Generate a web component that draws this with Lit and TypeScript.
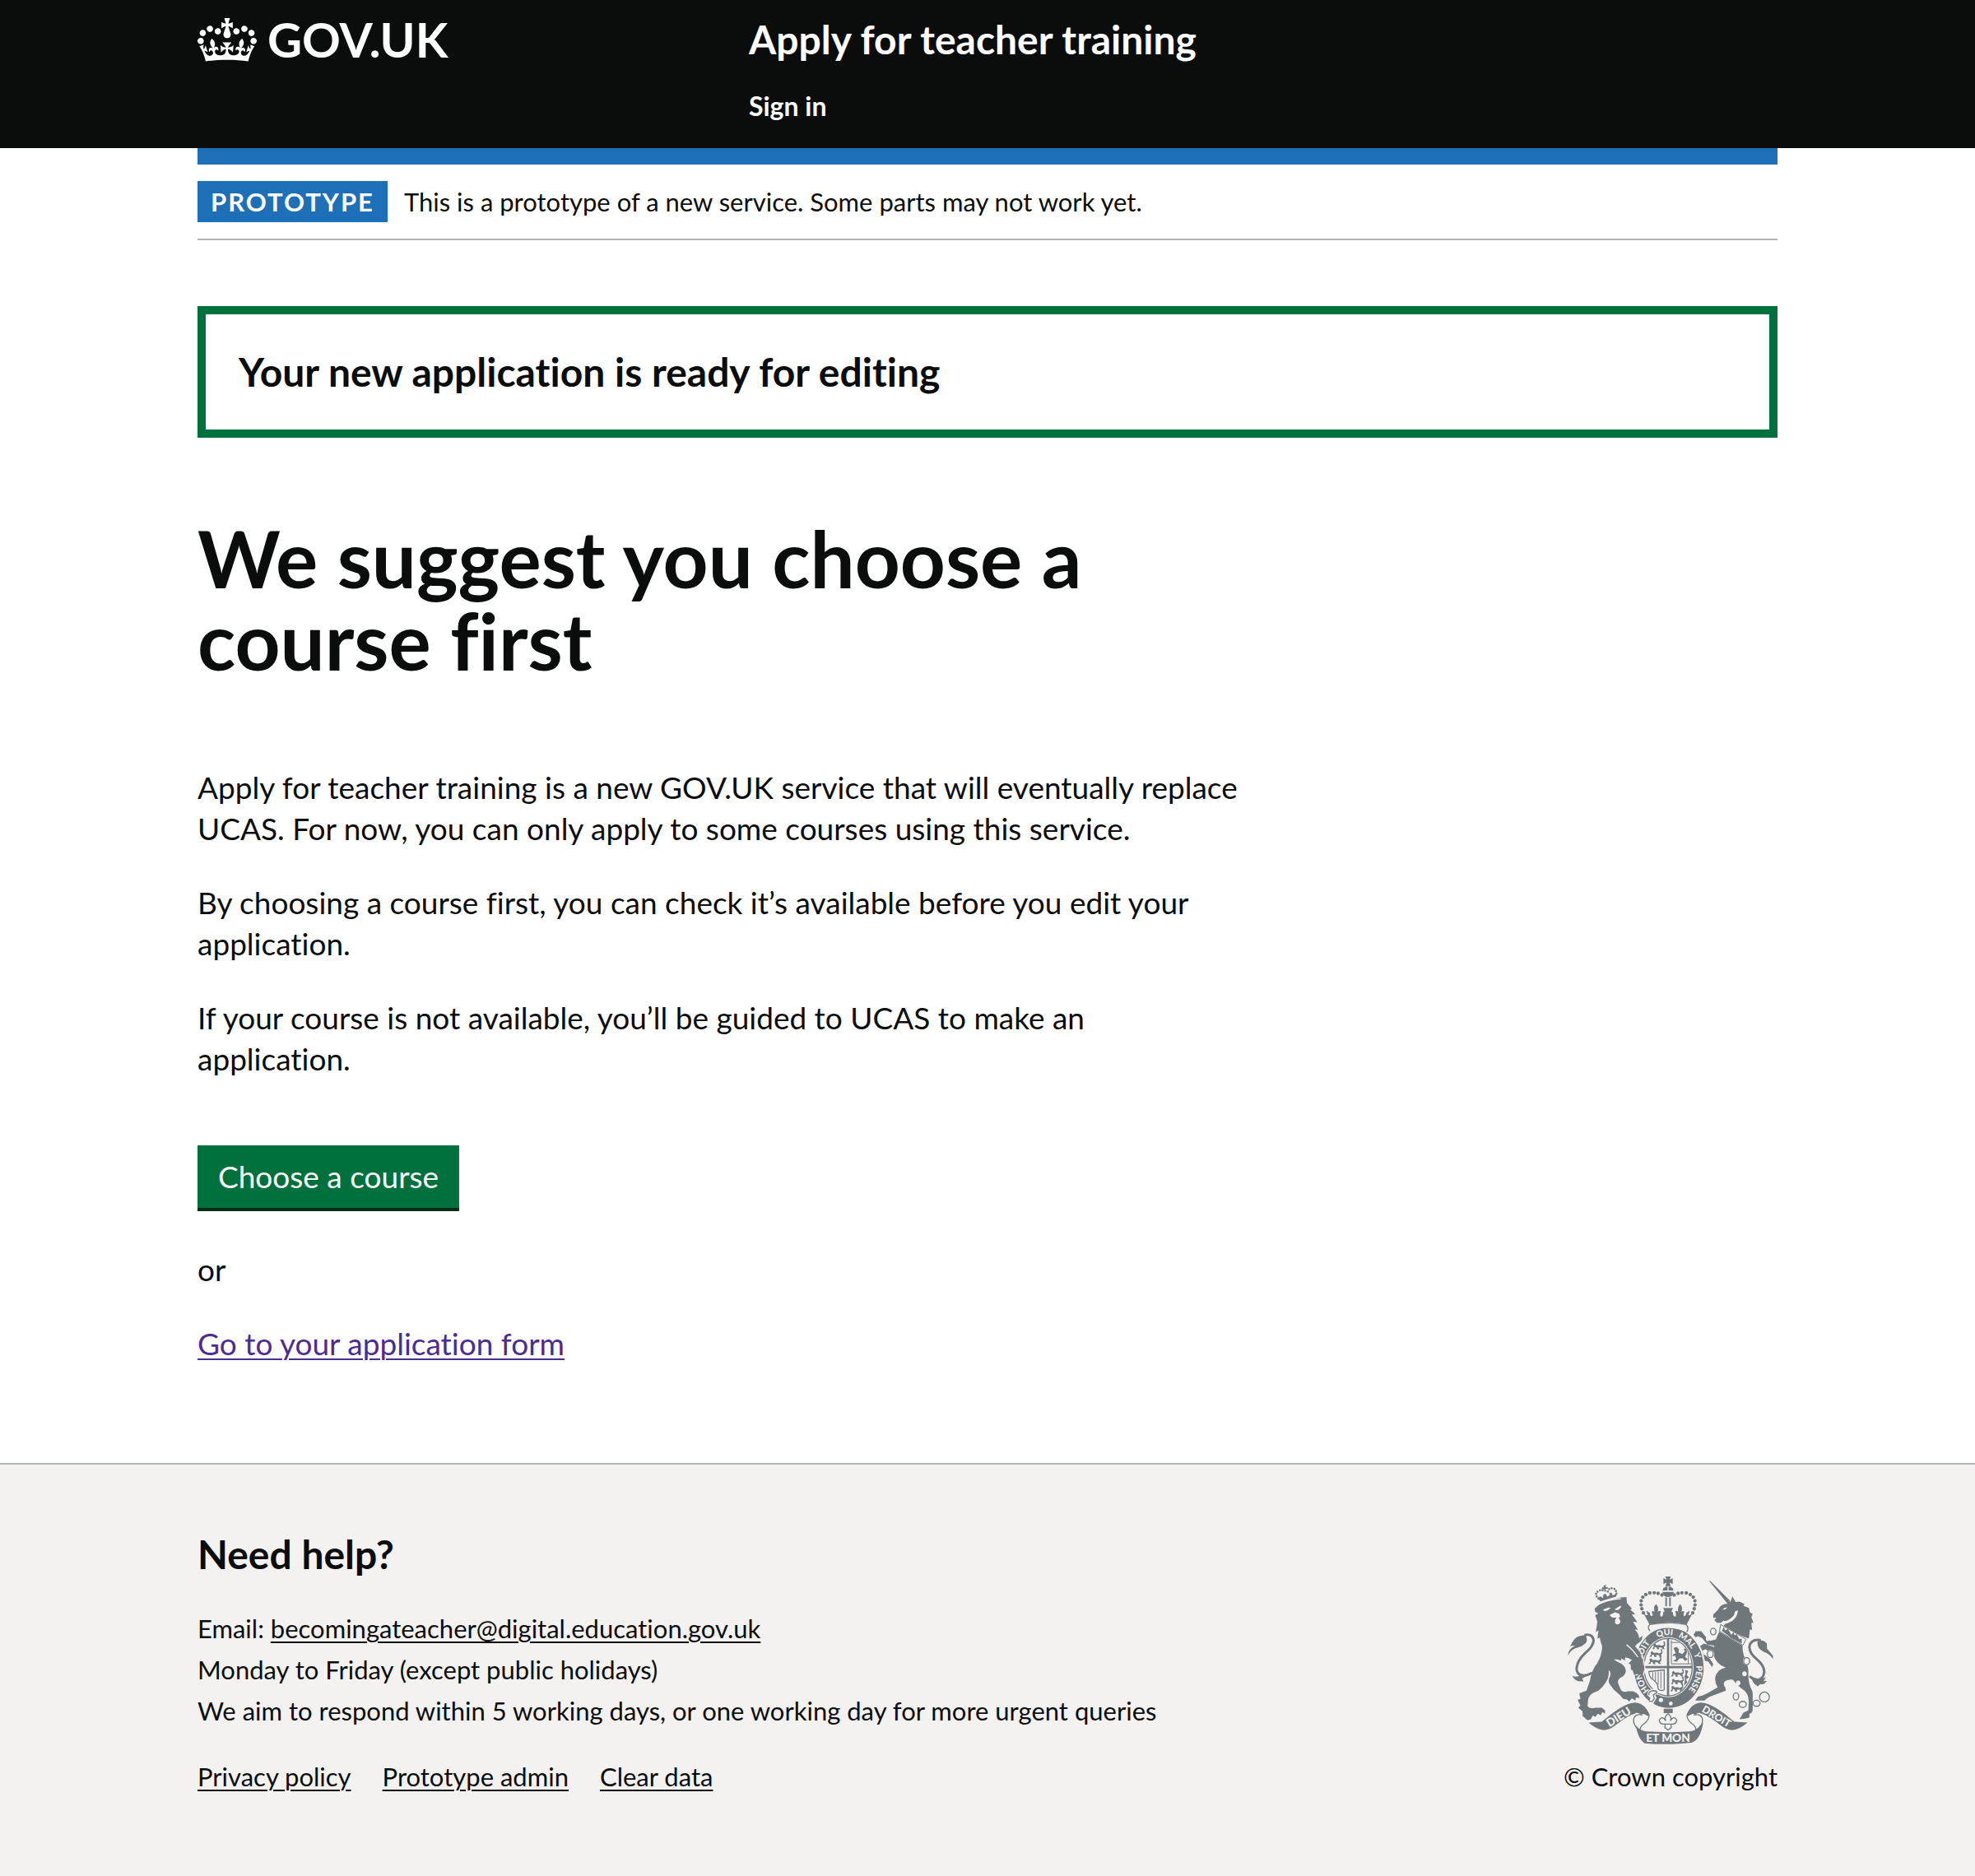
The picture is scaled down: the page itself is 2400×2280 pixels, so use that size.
import { LitElement, html, css, svg } from "lit";
import { customElement } from "lit/decorators.js";

const FONT = css`"Lato", "Noto Sans", sans-serif`;

@customElement("crown-mark")
class CrownMark extends LitElement {
  static styles = css`
    :host { display: block; }
    svg { display: block; width: 72px; height: 53px; }
  `;

  render() {
    return html`<svg viewBox="0 0 132 97" aria-hidden="true">
      <path fill="currentColor" fill-rule="evenodd" d="M25 30.2c3.5 1.5 7.7-.2 9.1-3.7 1.5-3.6-.2-7.8-3.9-9.2-3.6-1.4-7.6.3-9.1 3.9-1.4 3.5.3 7.5 3.9 9zM9 39.5c3.6 1.5 7.8-.2 9.2-3.7 1.5-3.6-.2-7.8-3.9-9.1-3.6-1.5-7.6.2-9.1 3.8-1.4 3.5.3 7.5 3.8 9zM4.4 57.2c3.5 1.5 7.7-.2 9.1-3.8 1.5-3.6-.2-7.7-3.9-9.1-3.5-1.5-7.6.3-9.1 3.8-1.4 3.5.3 7.6 3.9 9.1zm38.3-21.4c3.5 1.5 7.7-.2 9.1-3.8 1.5-3.6-.2-7.7-3.9-9.1-3.6-1.5-7.6.3-9.1 3.8-1.3 3.6.4 7.7 3.9 9.1zm64.4-5.6c-3.6 1.5-7.8-.2-9.1-3.7-1.5-3.6.2-7.8 3.8-9.2 3.6-1.4 7.7.3 9.2 3.9 1.3 3.5-.4 7.5-3.9 9zm15.9 9.3c-3.6 1.5-7.7-.2-9.1-3.7-1.5-3.6.2-7.8 3.7-9.1 3.6-1.5 7.7.2 9.2 3.8 1.5 3.5-.3 7.5-3.8 9zm4.7 17.7c-3.6 1.5-7.8-.2-9.2-3.8-1.5-3.6.2-7.7 3.9-9.1 3.6-1.5 7.7.3 9.2 3.8 1.3 3.5-.4 7.6-3.9 9.1zM89.3 35.8c-3.6 1.5-7.8-.2-9.2-3.8-1.4-3.6.2-7.7 3.9-9.1 3.6-1.5 7.7.3 9.2 3.8 1.4 3.6-.3 7.7-3.9 9.1zM69.7 17.7l8.9 4.7V9.3l-8.9 2.8c-.2-.3-.5-.6-.9-.9L72.4 0H59.6l3.5 11.2c-.3.3-.6.5-.9.9l-8.8-2.8v13.1l8.8-4.7c.3.3.6.7.9.9l-5 15.4v.1c-.2.8-.4 1.6-.4 2.4 0 4.1 3.1 7.5 7 8.1h.2c.3 0 .7.1 1 .1.4 0 .7 0 1-.1h.2c4-.6 7.1-4.1 7.1-8.1 0-.8-.1-1.7-.4-2.4V34l-5.1-15.4c.4-.2.7-.6 1-.9zM66 92.8c16.9 0 32.8 1.1 47.1 3.2 4-16.9 8.9-26.7 14-33.5l-9.6-3.4c1 4.9 1.1 7.2 0 10.2-1.5-1.4-3-4.3-4.2-8.7L108.6 76c2.8-2 5-3.2 7.5-3.3-4.4 9.4-10 11.9-13.6 11.2-4.3-.8-6.3-4.6-5.6-7.9 1-4.7 5.7-5.9 8-.5 4.3-8.7-3-11.4-7.6-8.8 7.1-7.2 7.9-13.5 2.1-21.1-8 6.1-8.1 12.3-4.5 20.8-4.7-5.4-12.1-2.5-9.5 6.2 3.4-5.2 7.9-2 7.2 3.1-.6 4.3-6.4 7.8-13.5 7.2-10.3-.9-10.9-8-11.2-13.8 2.5-.5 7.1 1.8 11 7.3L80.2 60c-4.1 4.4-8 5.3-12.3 5.4 1.4-4.4 8-11.6 8-11.6H55.5s6.4 7.2 7.9 11.6c-4.2-.1-8-1-12.3-5.4l1.4 16.4c3.9-5.5 8.5-7.7 10.9-7.3-.3 5.8-.9 12.8-11.1 13.8-7.2.6-12.9-2.9-13.5-7.2-.7-5 3.8-8.3 7.1-3.1 2.7-8.7-4.6-11.6-9.4-6.2 3.7-8.5 3.6-14.7-4.6-20.8-5.8 7.6-5 13.9 2.2 21.1-4.7-2.6-11.9.1-7.7 8.8 2.3-5.5 7.1-4.2 8.1.5.7 3.3-1.3 7.1-5.7 7.9-3.5.7-9-1.8-13.5-11.2 2.5.1 4.7 1.3 7.5 3.3l-4.7-15.4c-1.2 4.4-2.7 7.2-4.3 8.7-1.1-3-.9-5.3 0-10.2l-9.5 3.4c5 6.9 9.9 16.7 14 33.5 14.8-2.1 30.8-3.2 47.7-3.2z"></path>
    </svg>`;
  }
}

/** Royal coat of arms: lion, crowned garter and shield, unicorn, motto ribbon. */
@customElement("royal-arms")
class RoyalArms extends LitElement {
  static styles = css`
    :host { display: block; }
    svg { display: block; width: 250px; height: 204px; font-family: ${FONT}; font-weight: 900; }
    .ink { fill: #6f777b; }
    .paper { fill: #f3f2f1; }
    .line { fill: none; stroke: #6f777b; stroke-width: 4; }
    .thin { stroke-width: 3; }
    .tail { fill: none; stroke: #6f777b; stroke-width: 9; stroke-linecap: round; }
    .gap { fill: none; stroke: #f3f2f1; stroke-width: 4; }
    .beads { fill: none; stroke: #6f777b; stroke-width: 13; stroke-linecap: round; stroke-dasharray: 0 15; }
    .small-beads { fill: none; stroke: #6f777b; stroke-width: 8; stroke-linecap: round; stroke-dasharray: 0 10; }
    .garter { font-size: 31px; fill: #f3f2f1; text-anchor: middle; }
    .motto { font-size: 41px; fill: #f3f2f1; text-anchor: middle; }
    .motto-long { font-size: 37px; }
  `;

  private lion = svg`
    <g transform="translate(60 36)">
      <path class="tail" d="M76 224Q104 220 106 246 104 268 76 290 46 318 44 346 44 370 68 374 84 372 98 364"></path>
      <path class="ink" d="M12 300Q14 274 38 264 26 262 20 268 34 232 56 228L76 224Q86 240 78 254 60 270 44 272 24 278 12 300ZM28 374Q50 382 60 366L86 370 64 384 70 394 50 393Q36 390 28 374Z"></path>
      <path class="gap" d="M262 256Q292 300 294 350L288 372"></path>
      <path class="ink" d="M110 128L128 112 160 100 205 88 226 86 228 108 246 128 240 132 258 148 246 150 266 178 250 176 262 196 268 206 256 204Q272 220 272 236L284 228Q286 246 264 258L258 266 276 290 284 318 290 350 284 368 270 372 264 360 254 370 248 352 242 352 242 334 234 328 246 316 236 310 222 306 220 318 208 310 206 318 192 314 180 314 192 322Q224 334 224 356 222 372 206 380 192 388 196 402L206 426Q214 436 230 430L250 430Q264 434 272 446L272 456 262 452 258 464 246 456 236 468 228 460 214 458 202 444 180 424 166 406Q156 392 166 376 172 360 160 352 166 372 152 396 140 416 124 428L104 436Q88 446 86 462L84 484Q92 496 112 490L136 490 148 500 148 512 138 506 132 518 122 512 112 524 104 518 96 532 84 536 66 520 66 504 50 490 58 482 48 462 58 458 54 438 64 434 80 428 92 394Q100 350 118 330L130 306Q142 268 134 256L128 234 120 238 124 208 114 214 120 176 112 152 124 146 112 140Z"></path>
      <path class="paper" d="M140 132L162 124 168 127Q158 138 146 137ZM184 130L204 118 207 122Q198 135 188 134ZM164 152Q176 146 184 142L200 147 203 158 197 162Q208 174 201 183 190 190 184 180 184 166 190 161L174 161Z"></path>
      <path class="gap" d="M226 260Q252 280 268 306"></path>
      <path class="ink" d="M122 88L132 84 140 90 142 76 150 74 156 84 164 80 164 70 172 70 176 80 188 74 190 84 130 102Z M142 44L152 42 150 50 158 50 158 56 150 56 152 66 145 66 145 57 137 58 137 51 144 50Z"></path>
      <path class="small-beads" d="M124 92Q106 74 124 64T142 70"></path>
      <path class="small-beads" d="M158 66Q162 52 176 54T190 80"></path>
      <path class="gap" d="M122 114Q156 96 206 92"></path>
    </g>`;

  private unicorn = svg`
    <g transform="translate(435 36)">
      <path class="ink" d="M152 26L159 29 226 96 234 112 220 110Z"></path>
      <path class="ink" d="M230 106L238 84 250 104 264 103 282 112 278 118 298 126 302 142 312 148 307 160 315 180 307 180 310 206 302 204 298 238 278 230 240 214 206 192 216 176 206 172 196 180 182 180 172 170 180 161 168 162 168 150 184 134Q194 110 222 110Z"></path>
      <path class="paper" d="M258 134Q256 172 212 184 206 180 206 176 244 166 248 138ZM202 132Q208 123 219 124 214 133 202 132Z"></path>
      <path class="tail" d="M338 243Q304 240 300 268 300 292 328 314 356 338 354 362 350 388 328 388 312 386 304 378"></path>
      <path class="ink" d="M330 248Q350 238 364 256L364 274 386 300 386 312Q372 292 352 286 326 274 330 248ZM300 372Q330 394 360 378L352 394 364 392Q354 408 340 404L330 412Q312 400 310 388Z"></path>
      <path class="ink" d="M190 212L276 262Q272 278 282 306 298 340 296 364 296 400 306 420 314 432 312 452L312 500Q308 512 300 512L300 526 284 530 264 532 278 508 296 500 298 466Q296 440 282 428 256 410 240 388 222 386 210 394 202 404 212 416L214 428 160 448Q142 456 136 464L102 464 112 450 128 446 146 438 184 416Q172 396 176 376 184 350 214 344 180 332 170 300 166 260 190 212Z"></path>
      <path class="ink" d="M96 224L104 211 124 211 138 228 156 246 180 240 176 264 146 260 128 236 112 229 104 233ZM176 270L134 256 110 272 108 294 124 312 138 334 136 318 150 322 164 342 168 330 156 312 146 304 132 294 128 282 140 276 176 306Z"></path>
      <path class="paper" d="M194 184L290 240 276 264 190 212Z"></path>
      <path class="line thin" d="M195 186L288 240 276 262 191 211Z"></path>
      <path class="ink" d="M200 210L206 194 212 208 222 202 228 214 234 224 242 214 246 226 254 222 260 234 264 240 272 238 272 256 236 236Z"></path>
      <ellipse class="paper" cx="148" cy="238" rx="7" ry="9"></ellipse>
      <ellipse class="paper" cx="282" cy="366" rx="8" ry="9"></ellipse>
      <ellipse class="paper" cx="259" cy="400" rx="8" ry="9"></ellipse>
      <ellipse class="line" cx="168" cy="212" rx="10" ry="12"></ellipse>
      <ellipse class="paper" cx="157" cy="294" rx="15" ry="15"></ellipse>
      <ellipse class="line" cx="157" cy="294" rx="11" ry="13"></ellipse>
      <ellipse class="paper" cx="290" cy="320" rx="14" ry="15"></ellipse>
      <ellipse class="line" cx="290" cy="320" rx="11" ry="13"></ellipse>
      <ellipse class="line" cx="251" cy="449" rx="10" ry="13"></ellipse>
      <ellipse class="line" cx="276" cy="478" rx="13" ry="11"></ellipse>
      <ellipse class="line" cx="326" cy="474" rx="13" ry="11"></ellipse>
      <circle class="line" cx="355" cy="451" r="18"></circle>
    </g>`;

  private leopard = (x: number, y: number) => svg`
    <path class="ink" transform=${`translate(${x} ${y})`} d="M0 4L6 0 12 6 24 5 30 8 40 4 36 -6 42 -8 44 6 38 14 42 20 34 20 30 14 20 14 22 21 14 21 12 14 6 12 4 20 -4 20 2 12Z"></path>`;

  private shield = svg`
    <ellipse class="paper" cx="441" cy="380" rx="133" ry="153"></ellipse>
    <ellipse class="ink" cx="441" cy="380" rx="127" ry="147"></ellipse>
    <ellipse class="paper" cx="438" cy="378" rx="93" ry="110"></ellipse>
    <clipPath id="field"><ellipse cx="438" cy="378" rx="86" ry="103"></ellipse></clipPath>
    <g clip-path="url(#field)">
      ${this.leopard(384, 292)}${this.leopard(374, 320)}${this.leopard(370, 346)}
      ${this.leopard(452, 392)}${this.leopard(452, 420)}${this.leopard(450, 446)}
      <path class="ink" d="M500 388L512 392 506 406 514 416 504 422 508 434 496 446 500 424 498 412 502 402Z"></path>
      <path class="line thin" d="M450 280V366H524M450 288H500L512 320V366"></path>
      <path class="ink" d="M458 308L470 304 478 314 476 324 490 330 500 320 494 312 504 310 508 324 500 340 510 350 500 356 492 346 480 346 470 358 456 356 468 348 464 336 454 338 458 330 466 328Z"></path>
      <path class="line" d="M368 394L424 388V460Q414 468 402 458C402 420 368 430 368 394Z"></path>
      <path class="line thin" d="M382 396V420M392 396V430M402 394V442M412 394V456"></path>
    </g>
    <ellipse class="line" cx="438" cy="378" rx="88" ry="105"></ellipse>
    <path class="ink" d="M434 272H442V374H526V382H442V484H434V382H350V374H434Z"></path>
    <path id="garter-line" fill="none" d="M440 497A101 118 0 0 1 440 261A101 118 0 0 1 440 497"></path>
    <text class="garter"><textPath href="#garter-line" startOffset="17%">HON</textPath></text>
    <text class="garter"><textPath href="#garter-line" startOffset="34%">SOIT</textPath></text>
    <text class="garter"><textPath href="#garter-line" startOffset="48%">QUI</textPath></text>
    <text class="garter"><textPath href="#garter-line" startOffset="60%">MAL</textPath></text>
    <text class="garter"><textPath href="#garter-line" startOffset="69%">Y</textPath></text>
    <text class="garter"><textPath href="#garter-line" startOffset="81%">PENSE</textPath></text>
    <circle class="paper" cx="412" cy="498" r="8"></circle>
    <circle class="paper" cx="448" cy="511" r="7"></circle>
    <path class="paper" d="M362 480Q362 462 380 458 404 458 406 472L392 480 396 490 384 512 366 508 374 492Z"></path>
    <path class="line" d="M368 480Q366 466 384 464 396 464 398 470L384 480 388 492 380 504 368 502"></path>`;

  private crownHalf = svg`
    <path class="beads" d="M348 180Q322 120 372 107 404 104 420 118"></path>
    <path class="ink" d="M346 176Q354 190 364 188L358 172 372 180Q370 190 380 192 384 184 378 176 386 170 390 178 382 160 394 148 406 160 400 178 404 170 412 174 406 186 412 194 422 192 420 176 430 180 420 162H439V216Q400 216 370 222Z"></path>`;

  private crown = svg`
    <path class="ink" d="M428 47H448L443 59 455 53V75L443 69 448 82H428L433 69 421 75V53L433 59ZM418 98Q420 84 436 84V98ZM440 84Q456 84 458 98H440ZM417 103H459Q458 120 438 122 418 120 417 103ZM428 124H434V156H428ZM442 124H448V156H442Z"></path>
    ${this.crownHalf}
    <g transform="translate(876 0) scale(-1 1)">${this.crownHalf}</g>
    <path class="paper" d="M368 222Q438 206 508 222 520 240 506 250 438 220 372 248 358 238 368 222Z"></path>
    <path class="line" d="M372 222Q438 210 504 222 516 236 506 250M372 222Q360 232 372 246"></path>`;

  private ribbonSide = svg`
    <path class="ink" d="M148 580L196 577Q230 548 262 528 300 504 325 508 354 512 371 552 366 560 356 552 346 546 338 552 328 540 316 548 290 555 240 595 215 612 195 607 170 600 148 580Z"></path>
    <path class="line" d="M345 553Q314 546 312 572 312 588 326 602M369 554Q368 574 346 588 334 598 336 614"></path>`;

  private ribbon = svg`
    ${this.ribbonSide}
    <g transform="translate(876 0) scale(-1 1)">${this.ribbonSide}</g>
    <path class="ink" d="M320 590Q335 610 358 613 438 618 518 613 541 610 556 590L566 582Q556 644 524 654 438 664 352 656 328 640 320 590Z"></path>
    <path class="ink" d="M422 530H455V546H422Z"></path>
    <path class="line" d="M438 548Q422 560 430 574 416 552 406 572 408 586 420 586L428 586 426 598 438 608 450 598 448 586 456 586Q468 586 470 572 460 552 446 574 454 560 438 548ZM424 586H452"></path>
    <text class="motto" transform="translate(265 572) rotate(-32)">DIEU</text>
    <text class="motto" x="438" y="650">ET MON</text>
    <text class="motto motto-long" transform="translate(608 569) rotate(31)">DROIT</text>`;

  render() {
    return html`<svg viewBox="72 47 750 613" role="img" aria-label="Royal coat of arms">
      ${this.unicorn}${this.shield}${this.crown}${this.lion}${this.ribbon}
    </svg>`;
  }
}

@customElement("app-root")
class AppRoot extends LitElement {
  static styles = css`
    :host {
      display: flex;
      flex-direction: column;
      min-height: 100vh;
      background: #fff;
      color: #0b0c0c;
      font-family: ${FONT};
      font-size: 37px;
      line-height: 50px;
      font-variant-ligatures: no-common-ligatures;
    }
    h1, h2, p { margin: 0; }
    a { color: inherit; text-decoration-thickness: 2px; text-underline-offset: 4px; }
    .wrap { box-sizing: border-box; width: calc(100% - 60px); max-width: 1920px; margin: 0 auto; }
    .header { background: #0b0c0c; color: #fff; }
    .header a { text-decoration: none; font-weight: 700; }
    .header-grid { display: grid; grid-template-columns: 1fr 2fr; column-gap: 45px; padding: 18px 0 26px; }
    .logo { display: flex; align-items: center; gap: 13px; height: 60px; font-size: 58px; line-height: 60px; }
    .service { display: flex; flex-direction: column; align-items: flex-start; gap: 26px; }
    .service-name { font-size: 48px; line-height: 60px; }
    .nav-link { font-size: 32px; }
    .bar { height: 20px; background: #1d70b8; }
    .phase { display: flex; align-items: center; gap: 20px; padding: 20px 0; border-bottom: 2px solid #b1b4b6; font-size: 31px; }
    .tag { flex: none; padding: 0 16px; background: #1d70b8; color: #fff; font-weight: 700; letter-spacing: 2px; text-transform: uppercase; }
    .main { padding: 80px 0 120px; }
    .banner { padding: 40px; border: 10px solid #00703c; margin-bottom: 96px; }
    .banner-title { font-size: 48px; line-height: 60px; font-weight: 700; }
    .column { max-width: 1268px; }
    .title { font-size: 96px; line-height: 100px; font-weight: 700; margin-bottom: 104px; max-width: 1200px; }
    .copy { display: flex; flex-direction: column; gap: 40px; }
    .button {
      display: block; margin: 80px 0 50px; padding: 19px 25px; border: 0; border-radius: 0;
      background: #00703c; color: #fff; box-shadow: 0 4px 0 #002d18;
      font: inherit; line-height: 38px; cursor: pointer;
    }
    .visited { color: #4c2c92; }
    .footer { flex: 1; background: #f3f2f1; border-top: 2px solid #b1b4b6; font-size: 31px; }
    .footer-row { display: flex; justify-content: space-between; align-items: flex-end; gap: 60px; padding: 80px 0 96px; }
    .footer-title { font-size: 48px; line-height: 58px; font-weight: 700; margin-bottom: 36px; }
    .footer-links { display: flex; flex-wrap: wrap; gap: 0 38px; margin: 30px 0 0; padding: 0; list-style: none; }
    .crown-copyright { display: flex; flex-direction: column; align-items: center; gap: 14px; flex: none; text-decoration: none; }
  `;

  render() {
    return html`
      <header class="header">
        <div class="wrap header-grid">
          <a class="logo" href="#"><crown-mark></crown-mark><span>GOV.UK</span></a>
          <div class="service">
            <a class="service-name" href="#">Apply for teacher training</a>
            <a class="nav-link" href="#">Sign in</a>
          </div>
        </div>
      </header>
      <div class="wrap">
        <div class="bar"></div>
        <div class="phase">
          <strong class="tag">Prototype</strong>
          <span>This is a prototype of a new service. Some parts may not work yet.</span>
        </div>
        <main class="main">
          <div class="banner"><h2 class="banner-title">Your new application is ready for editing</h2></div>
          <div class="column">
            <h1 class="title">We suggest you choose a course first</h1>
            <div class="copy">
              <p>Apply for teacher training is a new GOV.UK service that will eventually replace UCAS. For now, you can only apply to some courses using this service.</p>
              <p>By choosing a course first, you can check it’s available before you edit your application.</p>
              <p>If your course is not available, you’ll be guided to UCAS to make an application.</p>
            </div>
            <button class="button" type="button">Choose a course</button>
            <div class="copy">
              <p>or</p>
              <p><a class="visited" href="#">Go to your application form</a></p>
            </div>
          </div>
        </main>
      </div>
      <footer class="footer">
        <div class="wrap footer-row">
          <div>
            <h2 class="footer-title">Need help?</h2>
            <p>Email: <a href="mailto:becomingateacher@digital.education.gov.uk">becomingateacher@digital.education.gov.uk</a></p>
            <p>Monday to Friday (except public holidays)</p>
            <p>We aim to respond within 5 working days, or one working day for more urgent queries</p>
            <ul class="footer-links">
              <li><a href="#">Privacy policy</a></li>
              <li><a href="#">Prototype admin</a></li>
              <li><a href="#">Clear data</a></li>
            </ul>
          </div>
          <a class="crown-copyright" href="#"><royal-arms></royal-arms><span>© Crown copyright</span></a>
        </div>
      </footer>
    `;
  }
}
